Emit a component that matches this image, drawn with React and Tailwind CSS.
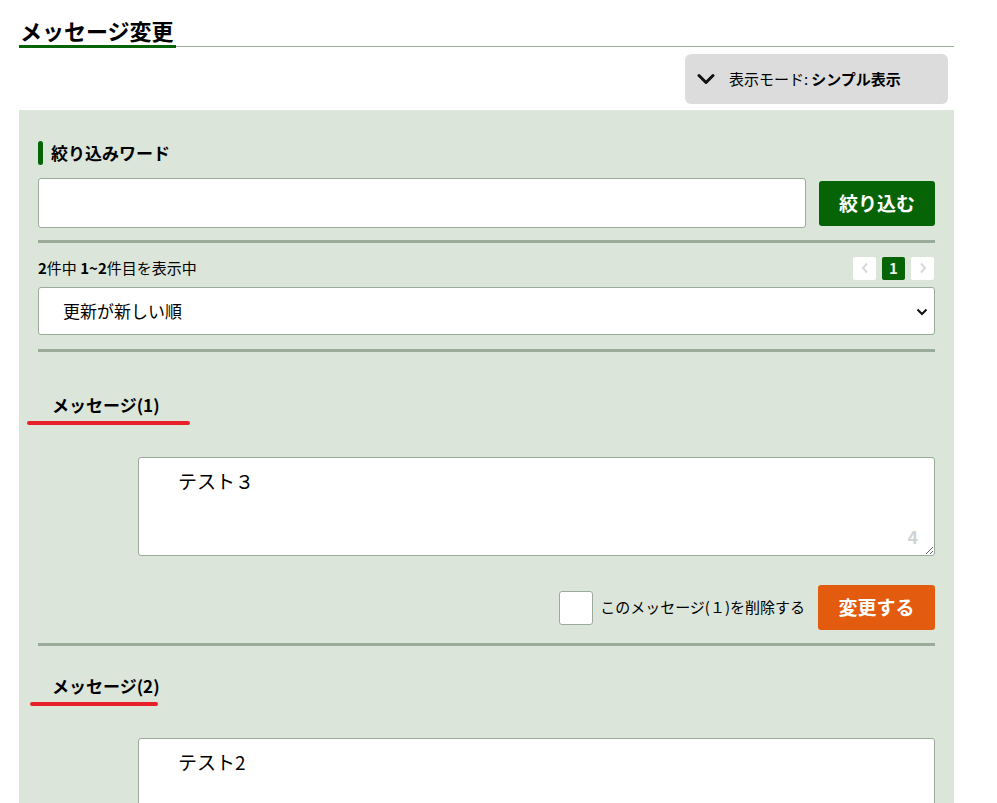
import React from "react";

const font = "font-['Noto_Sans_CJK_JP','Noto_Sans',sans-serif]";

const Divider = () => <div className="h-[3px] bg-[#9aab9a]" />;

const MessageBlock = ({ index, text, count, topGap, barWidth, barOffset }) => (
  <div>
    <div className={topGap}>
      <h3 className="pl-[14px] text-[17px] font-bold leading-[24px] text-black">
        メッセージ({index})
      </h3>
      <div
        className={`mt-[4px] h-[4px] rounded-full bg-[#e8202a] ${barWidth} ${barOffset}`}
      />
    </div>
    <div className="relative ml-[100px] mt-[32px]">
      <textarea
        defaultValue={text}
        className="block h-[99px] w-full resize-y rounded-[3px] border border-[#9aab9a] bg-white pl-[39px] pr-4 pt-[8px] text-[19px] leading-[30px] text-black outline-none"
      />
      {count && (
        <span className="pointer-events-none absolute bottom-[8px] right-[17px] text-[18px] font-bold leading-[24px] text-[#d3d3d3]">
          {count}
        </span>
      )}
    </div>
  </div>
);

export default function App() {
  return (
    <div className={`${font} min-h-screen bg-white text-black`}>
      <div className="ml-[19px] w-[935px]">
        {/* page title */}
        <div className="flex border-b border-[#9aab9a] pt-[15px]">
          <h1 className="mb-[-2px] border-b-[3px] border-[#066406] pl-px pr-[2px] text-[22px] font-bold leading-[30px]">
            メッセージ変更
          </h1>
        </div>

        {/* display mode */}
        <div className="mr-[6px] mt-[7px] flex justify-end">
          <button className="flex h-[50px] w-[263px] items-center rounded-md bg-[#dcdcdc] pl-[12px] text-[15px]">
            <svg width="18" height="12" viewBox="0 0 18 12" className="mr-[14px]">
              <path
                d="M2 2.5 9 9.5 16 2.5"
                fill="none"
                stroke="#111"
                strokeWidth="3"
                strokeLinecap="round"
                strokeLinejoin="round"
              />
            </svg>
            <span>表示モード:</span>
            <span className="ml-[3px] font-bold">シンプル表示</span>
          </button>
        </div>

        {/* filter panel */}
        <div className="mt-[6px] bg-[#dbe5da] px-[19px] pb-10 pt-[31px]">
          <div className="flex h-[24px] items-center">
            <span className="h-[24px] w-[5px] rounded-full bg-[#066406]" />
            <span className="ml-[8px] text-[17px] font-bold leading-[24px]">
              絞り込みワード
            </span>
          </div>

          <div className="mt-[13px] flex items-center gap-[13px]">
            <input
              type="text"
              className="h-[50px] flex-1 rounded-[3px] border border-[#9aab9a] bg-white px-3 text-[16px] outline-none"
            />
            <button className="h-[45px] w-[116px] rounded-[3px] bg-[#066406] text-[19px] font-bold text-white">
              絞り込む
            </button>
          </div>

          <div className="mt-[12px]">
            <Divider />
          </div>

          <div className="mt-[13px] flex h-[24px] items-center justify-between">
            <p className="text-[15px] leading-[20px]">
              <span className="font-bold">2</span>件中{" "}
              <span className="font-bold">1~2</span>件目を表示中
            </p>
            <div className="flex gap-[6px] pr-px">
              <span className="flex h-[23px] w-[23px] items-center justify-center rounded-[2px] bg-white">
                <svg width="8" height="12" viewBox="0 0 8 12">
                  <path d="M6 1.5 2 6l4 4.5" fill="none" stroke="#d8d8d8" strokeWidth="2" />
                </svg>
              </span>
              <span className="flex h-[23px] w-[23px] items-center justify-center rounded-[2px] bg-[#066406] text-[15px] font-bold text-[#e8efe8]">
                1
              </span>
              <span className="flex h-[23px] w-[23px] items-center justify-center rounded-[2px] bg-white">
                <svg width="8" height="12" viewBox="0 0 8 12">
                  <path d="M2 1.5 6 6l-4 4.5" fill="none" stroke="#d8d8d8" strokeWidth="2" />
                </svg>
              </span>
            </div>
          </div>

          <div className="relative mt-[7px]">
            <select
              defaultValue="new"
              className="block h-[48px] w-full appearance-none rounded-[3px] border border-[#9aab9a] bg-white pl-[24px] text-[17px] text-black outline-none"
            >
              <option value="new">更新が新しい順</option>
              <option value="old">更新が古い順</option>
            </select>
            <svg
              width="12"
              height="8"
              viewBox="0 0 12 8"
              className="pointer-events-none absolute right-[7px] top-[21px]"
            >
              <path
                d="M1.5 1.5 6 6l4.5-4.5"
                fill="none"
                stroke="#111"
                strokeWidth="2"
              />
            </svg>
          </div>

          <div className="mt-[14px]">
            <Divider />
          </div>

          <MessageBlock
            index={1}
            text="テスト３"
            count="4"
            topGap="mt-[41px]"
            barWidth="w-[163px]"
            barOffset="ml-[-11px]"
          />

          <div className="mt-[29px] flex items-center justify-end">
            <span className="h-[34px] w-[34px] rounded-[3px] border border-[#9aab9a] bg-white" />
            <span className="ml-[7px] text-[15px]">このメッセージ(１)を削除する</span>
            <button className="ml-[13px] h-[45px] w-[117px] rounded-[3px] bg-[#e35b0f] text-[19px] font-bold text-white">
              変更する
            </button>
          </div>

          <div className="mt-[13px]">
            <Divider />
          </div>

          <MessageBlock
            index={2}
            text="テスト2"
            topGap="mt-[28px]"
            barWidth="w-[128px]"
            barOffset="ml-[-8px]"
          />
        </div>
      </div>
    </div>
  );
}
